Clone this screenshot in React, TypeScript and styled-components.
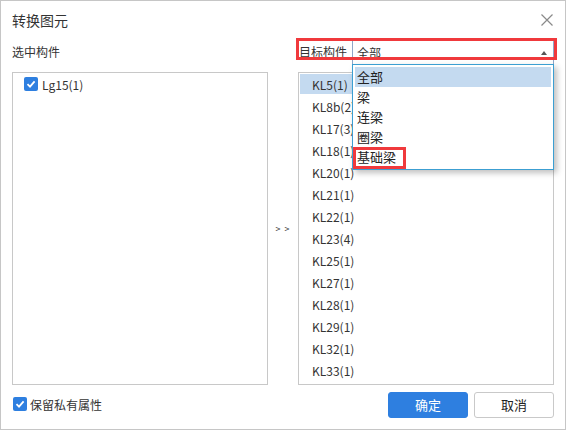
import styled, { createGlobalStyle } from 'styled-components';

const SOURCE = ['Lg15(1)'];
const TARGETS = [
  'KL5(1)', 'KL8b(2)', 'KL17(3)', 'KL18(1)', 'KL20(1)', 'KL21(1)', 'KL22(1)',
  'KL23(4)', 'KL25(1)', 'KL27(1)', 'KL28(1)', 'KL29(1)', 'KL32(1)', 'KL33(1)',
];
const OPTIONS = ['全部', '梁', '连梁', '圈梁', '基础梁'];

const GlobalStyle = createGlobalStyle`
  html, body {
    margin: 0;
    background: #fff;
  }
  body {
    font-family: "Microsoft YaHei", "Noto Sans CJK SC", "Noto Sans", sans-serif;
    color: #333;
  }
`;

function Check() {
  return (
    <CheckBox>
      <svg width="10" height="10" viewBox="0 0 10 10">
        <path d="M1.5 5.2 L4 7.6 L8.6 2.4" fill="none" stroke="#fff" strokeWidth="1.8" />
      </svg>
    </CheckBox>
  );
}

function App() {
  return (
    <>
      <GlobalStyle />
      <Dialog>
        <Header>
          <Title>转换图元</Title>
          <Close>
            <svg width="12" height="12" viewBox="0 0 12 12">
              <path d="M0.5 0.5 L11.5 11.5 M11.5 0.5 L0.5 11.5" stroke="#8a8a8a" strokeWidth="1.2" />
            </svg>
          </Close>
        </Header>
        <Body>
          <Label>选中构件</Label>
          <span />
          <TargetRow>
            <Label $wide>目标构件</Label>
            <SelectWrap>
              <Select>
                <span>全部</span>
                <Arrow />
              </Select>
              <Dropdown>
                {OPTIONS.map((o, i) => (
                  <Option key={o} $active={i === 0} $marked={i === OPTIONS.length - 1}>
                    {o}
                  </Option>
                ))}
              </Dropdown>
            </SelectWrap>
            <Mark />
          </TargetRow>

          <List>
            {SOURCE.map((s) => (
              <Item key={s} $check>
                <Check />
                {s}
              </Item>
            ))}
          </List>
          <Move>&gt; &gt;</Move>
          <List>
            {TARGETS.map((t, i) => (
              <Item key={t} $active={i === 0}>
                {t}
              </Item>
            ))}
          </List>
        </Body>
        <Footer>
          <Keep>
            <Check />
            保留私有属性
          </Keep>
          <Buttons>
            <Button $primary>确定</Button>
            <Button>取消</Button>
          </Buttons>
        </Footer>
      </Dialog>
    </>
  );
}

const Dialog = styled.div`
  width: 566px;
  height: 430px;
  box-sizing: border-box;
  border: 1px solid #c6c6c6;
  padding: 0 11px;
  display: flex;
  flex-direction: column;
`;

const Header = styled.div`
  height: 37px;
  display: flex;
  align-items: center;
  justify-content: space-between;
`;

const Title = styled.div`
  font-size: 14px;
  line-height: 20px;
  margin-top: 1px;
`;

const Close = styled.div`
  display: flex;
  margin-right: 1px;
  margin-top: 1px;
`;

const Body = styled.div`
  display: grid;
  grid-template-columns: 256px 30px 256px;
  grid-template-rows: 34px 313px;
`;

const Label = styled.div<{ $wide?: boolean }>`
  font-size: 12px;
  line-height: 24px;
  margin-top: 2px;
  width: ${(p) => (p.$wide ? '54px' : 'auto')};
  padding-left: ${(p) => (p.$wide ? '1px' : '0')};
  box-sizing: border-box;
  flex-shrink: 0;
`;

const TargetRow = styled.div`
  position: relative;
  display: flex;
  align-items: flex-start;
`;

const SelectWrap = styled.div`
  position: relative;
  flex: 1;
  margin-top: 2px;
`;

const Select = styled.div`
  height: 24px;
  box-sizing: border-box;
  border: 1px solid #8fa6c8;
  border-bottom: none;
  display: flex;
  align-items: center;
  justify-content: space-between;
  padding: 0 6px 0 4px;
  font-size: 12px;
  background: #fff;
`;

const Arrow = styled.span`
  width: 0;
  height: 0;
  border-left: 3px solid transparent;
  border-right: 3px solid transparent;
  border-bottom: 4px solid #555;
`;

const Dropdown = styled.div`
  position: absolute;
  top: 100%;
  left: 0;
  right: 0;
  z-index: 2;
  background: #fff;
  border: 1px solid #3c9fd2;
  padding: 2px;
  box-shadow: 3px 3px 6px rgba(0, 0, 0, 0.25);
`;

const Option = styled.div<{ $active?: boolean; $marked?: boolean }>`
  position: relative;
  height: 20px;
  line-height: 20px;
  font-size: 13px;
  color: #222;
  padding-left: 2px;
  background: ${(p) => (p.$active ? '#c4daf0' : 'transparent')};

  &::after {
    content: '';
    display: ${(p) => (p.$marked ? 'block' : 'none')};
    position: absolute;
    left: -2px;
    top: 0;
    width: 53px;
    height: 22px;
    box-sizing: border-box;
    border: 3px solid #f0393c;
  }
`;

const Mark = styled.div`
  position: absolute;
  left: -2px;
  top: 0;
  width: 261px;
  height: 22px;
  box-sizing: border-box;
  border: 3px solid #f0393c;
  pointer-events: none;
`;

const List = styled.div`
  border: 1px solid #c8c8c8;
  padding: 1px;
  overflow: hidden;
`;

const Item = styled.div<{ $active?: boolean; $check?: boolean }>`
  height: 20px;
  margin-bottom: 2px;
  display: flex;
  align-items: center;
  gap: 4px;
  padding-left: ${(p) => (p.$check ? '10px' : '12px')};
  font-size: 12px;
  background: ${(p) => (p.$active ? '#c4daf0' : 'transparent')};
`;

const CheckBox = styled.span`
  width: 14px;
  height: 14px;
  border-radius: 2px;
  background: #2e7fe0;
  display: inline-flex;
  align-items: center;
  justify-content: center;
  flex-shrink: 0;
`;

const Move = styled.div`
  display: flex;
  align-items: center;
  justify-content: center;
  font-size: 9px;
  color: #333;
  letter-spacing: 1px;
`;

const Footer = styled.div`
  display: flex;
  align-items: center;
  justify-content: space-between;
  height: 38px;
`;

const Keep = styled.div`
  display: flex;
  align-items: center;
  gap: 3px;
  font-size: 12px;
  margin-left: 1px;
`;

const Buttons = styled.div`
  display: flex;
  gap: 6px;
  margin-top: 1px;
`;

const Button = styled.button<{ $primary?: boolean }>`
  width: 80px;
  height: 26px;
  border-radius: 3px;
  font-family: inherit;
  font-size: 13px;
  border: 1px solid ${(p) => (p.$primary ? '#2e7fe0' : '#c9c9c9')};
  background: ${(p) => (p.$primary ? '#2e7fe0' : '#fff')};
  color: ${(p) => (p.$primary ? '#fff' : '#222')};
  padding: 0;
`;

export default App;
